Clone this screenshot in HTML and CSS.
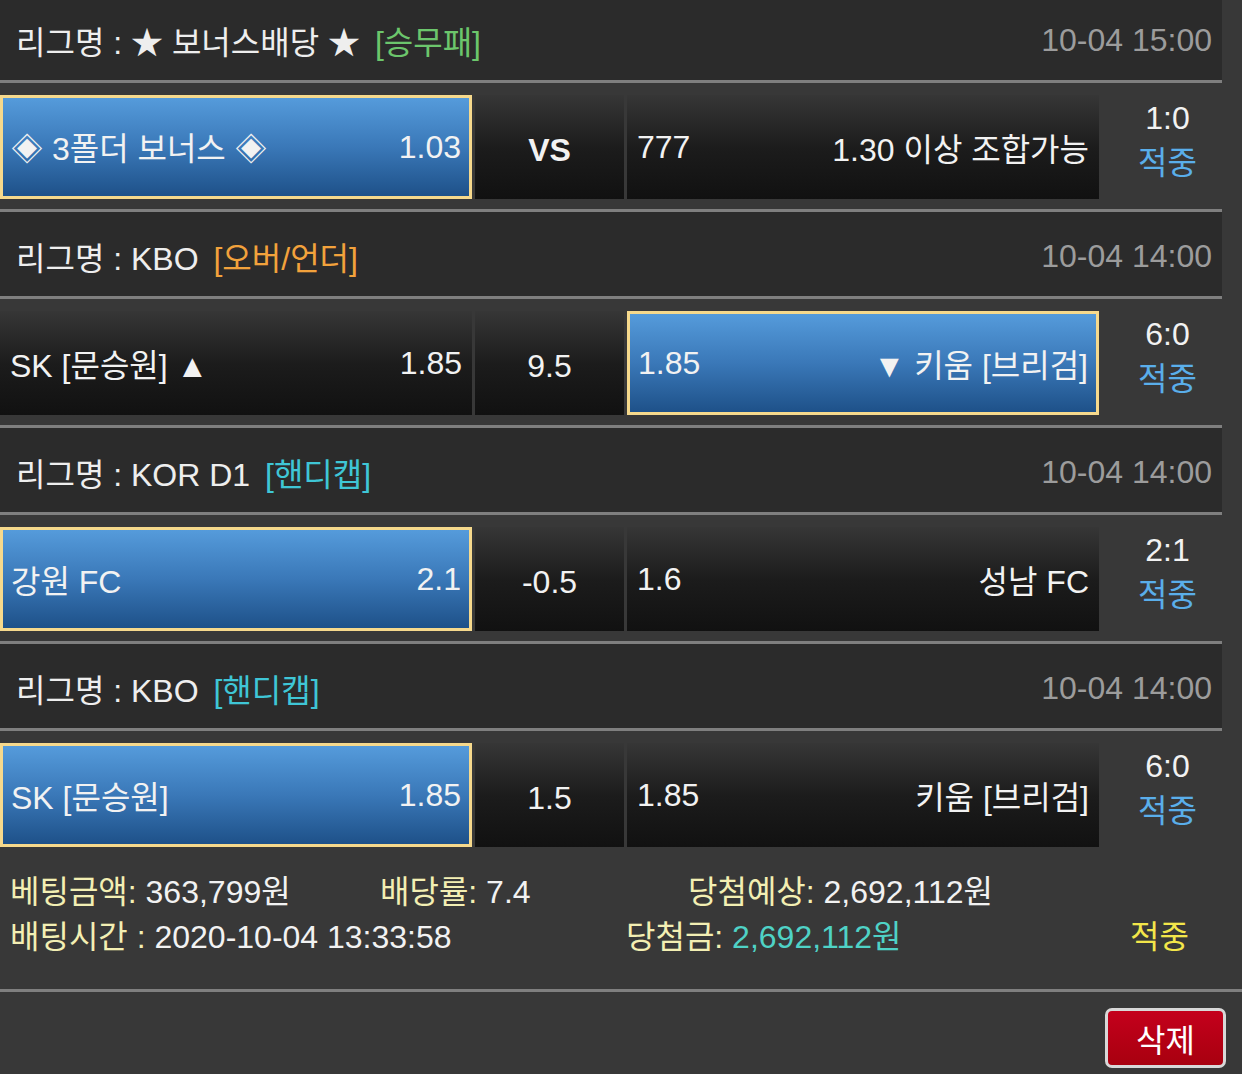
FILE: index.html
```html
<!DOCTYPE html>
<html lang="ko">
<head>
<meta charset="utf-8">
<title>배팅내역</title>
<link rel="stylesheet" href="styles.css">
</head>
<body>
<div class="board">
  <section class="game">
    <div class="league">
      <div class="league-name">리그명 : ★ 보너스배당 ★ <span class="tag tag-green">[승무패]</span></div>
      <div class="league-time">10-04 15:00</div>
    </div>
    <div class="bet-row">
      <div class="cell side selected"><span>◈ 3폴더 보너스 ◈</span><span>1.03</span></div>
      <div class="cell mid bold">VS</div>
      <div class="cell side"><span>777</span><span>1.30 이상 조합가능</span></div>
      <div class="score"><div>1:0</div><div class="hit">적중</div></div>
    </div>
  </section>

  <section class="game">
    <div class="league">
      <div class="league-name">리그명 : KBO <span class="tag tag-orange">[오버/언더]</span></div>
      <div class="league-time">10-04 14:00</div>
    </div>
    <div class="bet-row">
      <div class="cell side"><span>SK [문승원] ▲</span><span>1.85</span></div>
      <div class="cell mid">9.5</div>
      <div class="cell side selected"><span>1.85</span><span>▼ 키움 [브리검]</span></div>
      <div class="score"><div>6:0</div><div class="hit">적중</div></div>
    </div>
  </section>

  <section class="game">
    <div class="league">
      <div class="league-name">리그명 : KOR D1 <span class="tag tag-cyan">[핸디캡]</span></div>
      <div class="league-time">10-04 14:00</div>
    </div>
    <div class="bet-row">
      <div class="cell side selected"><span>강원 FC</span><span>2.1</span></div>
      <div class="cell mid">-0.5</div>
      <div class="cell side"><span>1.6</span><span>성남 FC</span></div>
      <div class="score"><div>2:1</div><div class="hit">적중</div></div>
    </div>
  </section>

  <section class="game last">
    <div class="league">
      <div class="league-name">리그명 : KBO <span class="tag tag-cyan">[핸디캡]</span></div>
      <div class="league-time">10-04 14:00</div>
    </div>
    <div class="bet-row">
      <div class="cell side selected"><span>SK [문승원]</span><span>1.85</span></div>
      <div class="cell mid">1.5</div>
      <div class="cell side"><span>1.85</span><span>키움 [브리검]</span></div>
      <div class="score"><div>6:0</div><div class="hit">적중</div></div>
    </div>
  </section>
</div>

<div class="summary">
  <div class="sum-line">
    <div class="item w1"><span class="lbl">베팅금액:</span> 363,799원</div>
    <div class="item w2"><span class="lbl">배당률:</span> 7.4</div>
    <div class="item"><span class="lbl">당첨예상:</span> 2,692,112원</div>
  </div>
  <div class="sum-line">
    <div class="item w3"><span class="lbl">배팅시간 :</span> 2020-10-04 13:33:58</div>
    <div class="item w4"><span class="lbl">당첨금:</span> <span class="teal">2,692,112원</span></div>
    <div class="item yellow">적중</div>
  </div>
</div>

<div class="actions">
  <button class="btn-delete">삭제</button>
</div>
</body>
</html>
```

FILE: styles.css
```css
html, body {
  margin: 0;
  padding: 0;
  background: #383838;
}

body {
  font-family: "Liberation Sans", "Noto Sans CJK KR", sans-serif;
  font-size: 32px;
  color: #f2f2f2;
  overflow: hidden;
}

.board {
  width: 1222px;
  margin-top: -4px;
}

.league {
  height: 87px;
  background: #2b2b2b;
  display: flex;
  align-items: center;
  justify-content: space-between;
  padding: 4px 10px 0 16px;
  box-sizing: border-box;
  border-bottom: 3px solid #7f7f7f;
}

.league-name {
  color: #eeeeee;
  white-space: nowrap;
}

.tag {
  margin-left: 6px;
}

.tag-green { color: #6cc66c; }
.tag-orange { color: #f2a23c; }
.tag-cyan { color: #3fc6d6; }

.league-time {
  color: #9c9c9c;
}

.bet-row {
  display: flex;
  align-items: stretch;
  height: 104px;
  padding: 12px 0 10px;
  border-bottom: 3px solid #7f7f7f;
}

.game.last .bet-row {
  border-bottom: none;
}

.cell {
  height: 104px;
  box-sizing: border-box;
  background: linear-gradient(#363636 0%, #1c1c1c 50%, #111111 100%);
  display: flex;
  align-items: center;
  white-space: nowrap;
}

.cell.side {
  width: 472px;
  justify-content: space-between;
  padding: 0 10px;
}

.cell.mid {
  width: 149px;
  margin: 0 3px;
  justify-content: center;
  padding-top: 6px;
}

.cell.bold {
  font-weight: bold;
}

.cell.selected {
  background: linear-gradient(#559bdb 0%, #3a78b8 50%, #1e5189 100%);
  border: 3px solid #f6d98c;
  padding: 0 8px 0 8px;
}

.score {
  flex: 1;
  box-sizing: border-box;
  display: flex;
  flex-direction: column;
  align-items: center;
  justify-content: center;
  line-height: 45px;
  padding-left: 14px;
  padding-bottom: 12px;
}

.hit {
  color: #5aaeea;
}

.summary {
  padding: 13px 0 29px 10px;
  border-bottom: 3px solid #7f7f7f;
}

.sum-line {
  display: flex;
  line-height: 45px;
  white-space: nowrap;
}

.item.w1 { width: 370px; }
.item.w2 { width: 308px; }
.item.w3 { width: 616px; }
.item.w4 { width: 504px; }

.lbl { color: #f3efb3; }
.teal { color: #4fd2c6; }
.yellow { color: #f3e64a; }

.actions {
  display: flex;
  justify-content: flex-end;
  padding: 16px 16px 0 0;
}

.btn-delete {
  width: 121px;
  height: 60px;
  border: 3px solid #d8d8d8;
  border-radius: 7px;
  background: linear-gradient(#c4001c, #a8000f);
  color: #ffffff;
  font-family: "Liberation Sans", "Noto Sans CJK KR", sans-serif;
  font-size: 32px;
  padding: 0;
  cursor: pointer;
}
```
